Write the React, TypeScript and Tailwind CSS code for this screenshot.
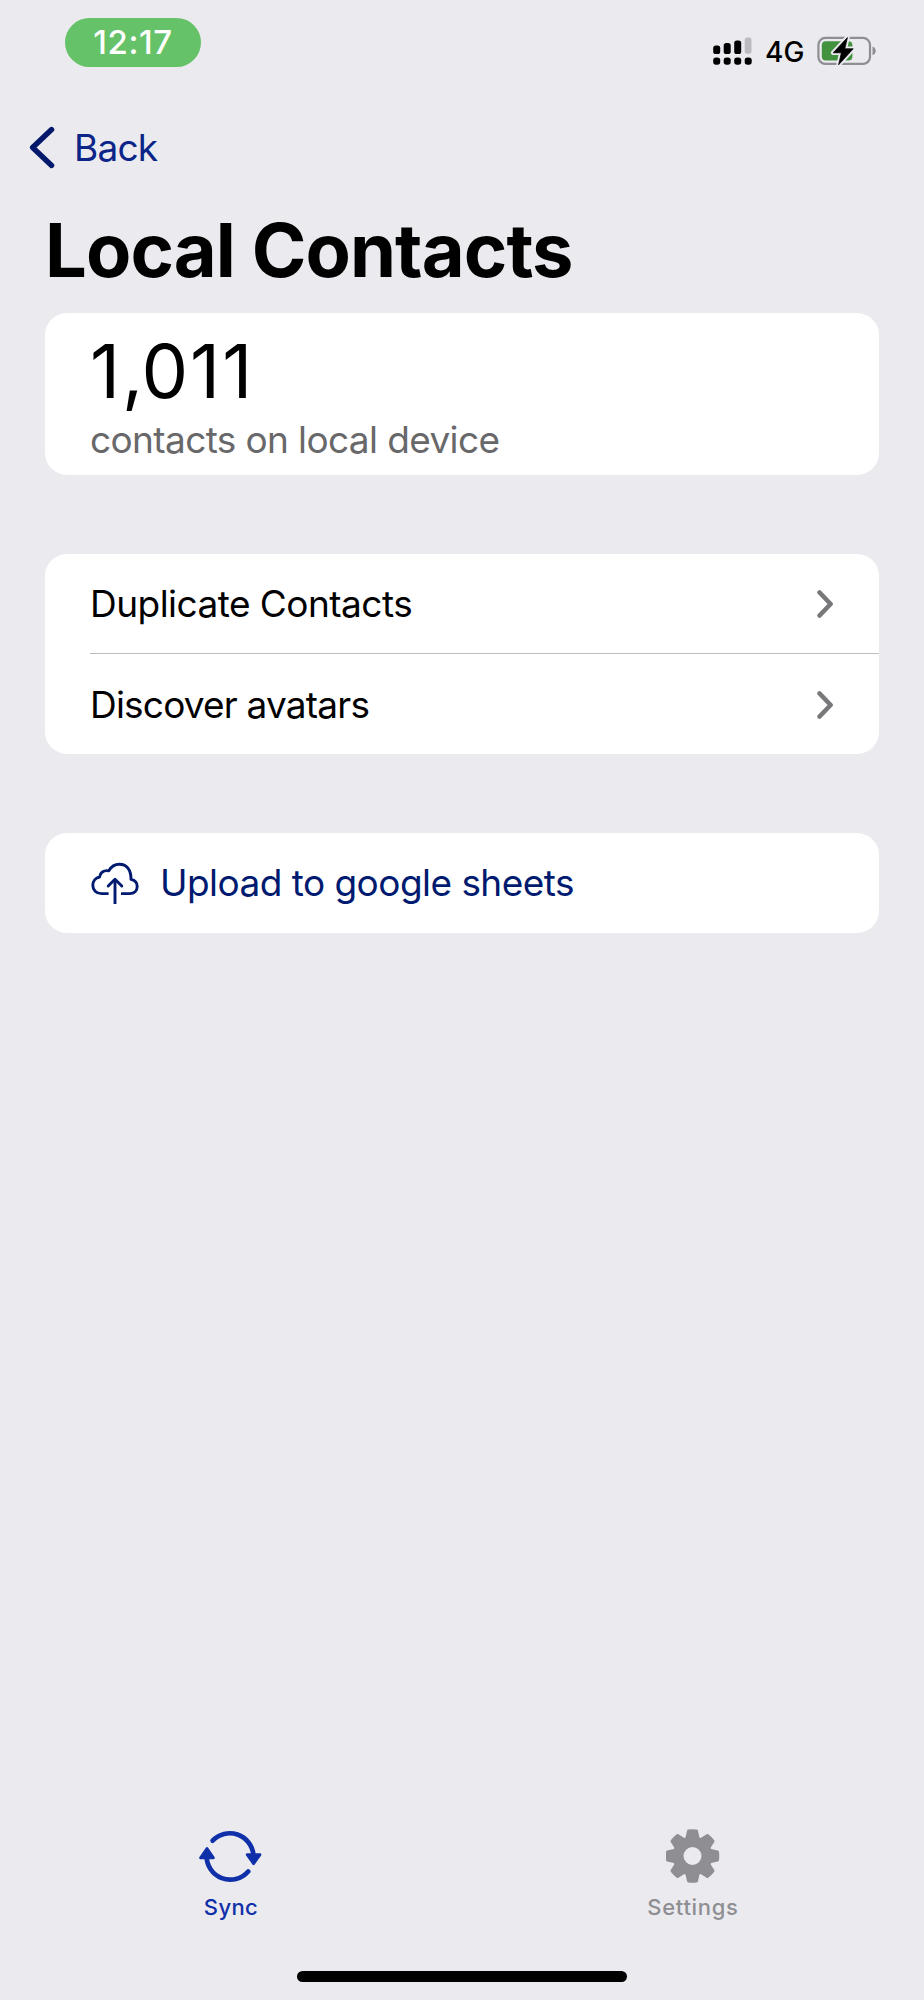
import React, { useState } from 'react';

interface MenuRow {
  id: number;
  label: string;
  tracking: string;
}

const ChevronRight = () => (
  <svg width="18" height="30" viewBox="0 0 18 30" fill="none">
    <path d="M2.6 3.5 L13.6 15 L2.6 26.5" stroke="#78787b" strokeWidth="4.6" strokeLinecap="round" strokeLinejoin="round" />
  </svg>
);

const SignalIcon = () => (
  <svg width="40" height="28" viewBox="0 0 40 28">
    <rect x="0.2" y="8.6" width="7" height="8.4" rx="2.6" />
    <rect x="10.7" y="6" width="7" height="11" rx="2.6" />
    <rect x="21.2" y="3.4" width="7" height="13.6" rx="2.6" />
    <rect x="31.7" y="0.4" width="6.8" height="16.4" rx="2.4" fill="#bcbcc0" />
    <rect x="0.2" y="20.4" width="7" height="7.4" rx="2.8" />
    <rect x="10.7" y="20.4" width="7" height="7.4" rx="2.8" />
    <rect x="21.2" y="20.4" width="7" height="7.4" rx="2.8" />
    <rect x="31.7" y="20.4" width="7" height="7.4" rx="2.8" />
  </svg>
);

const BatteryIcon = () => (
  <svg width="60" height="32" viewBox="0 0 60 32">
    <rect x="1.4" y="2.9" width="51.6" height="26" rx="7" fill="none" stroke="#8f8f93" strokeWidth="2.2" />
    <path d="M55.5 11.4 C59.8 12.8 59.8 18.8 55.5 20.2 Z" fill="#8f8f93" />
    <rect x="4.8" y="6.3" width="30.6" height="19.2" rx="4" fill="#43923f" />
    <path
      d="M30.4 2.6 L16.2 17.8 H24.4 L21.6 29.8 L36.2 13.8 H27.8 Z"
      stroke="#ebeaef"
      strokeWidth="4.6"
      strokeLinejoin="round"
    />
    <path d="M30.4 2.6 L16.2 17.8 H24.4 L21.6 29.8 L36.2 13.8 H27.8 Z" stroke="#000" strokeWidth="0.8" strokeLinejoin="round" />
  </svg>
);

const CloudUploadIcon = () => (
  <svg
    width="48"
    height="42"
    viewBox="0 0 48 42"
    fill="none"
    stroke="#001a70"
    strokeWidth="2.9"
    strokeLinejoin="round"
  >
    <path d="M17.6 31.6 H10.5 C5.2 31.6 1.8 27.9 1.8 23.3 C1.8 19 4.6 15.8 8.6 15 C8.9 10.8 12.6 7.8 17.8 8.8 C20.2 4.6 24 2.3 28.4 2.3 C35.4 2.3 40.2 7.6 40 17.4 C43.8 18.2 46.2 20.9 46.2 24.5 C46.2 28.6 43.2 31.6 38.6 31.6 H30" />
    <path d="M24 42 V17.4" />
    <path d="M17.2 24 L24 17.2 L30.8 24" strokeLinecap="round" />
  </svg>
);

const SyncIcon = () => (
  <svg width="64" height="54" viewBox="1 0.5 64 54" fill="none" stroke="#1030a9" strokeLinejoin="round">
    <path d="M14.6 12.2 A23.7 23.7 0 0 1 55.4 26" strokeWidth="4.7" strokeLinecap="round" />
    <path d="M50.2 43 A23.7 23.7 0 0 1 8.6 27" strokeWidth="4.7" strokeLinecap="round" />
    <path d="M49.2 26.2 H62 L55.6 35.2 Z" fill="#1030a9" strokeWidth="2.8" />
    <path d="M2.6 29.4 H15.4 L9 20 Z" fill="#1030a9" strokeWidth="2.8" />
  </svg>
);

const GearIcon = () => (
  <svg width="54" height="54" viewBox="-26.5 -27 54 54">
    <g fill="#8e8e93" stroke="#8e8e93" strokeWidth="3" strokeLinejoin="round">
      {[0, 45, 90, 135, 180, 225, 270, 315].map((angle) => (
        <path key={angle} d="M-6 -16 L-4 -25 Q0 -25.6 4 -25 L6 -16 Z" transform={`rotate(${angle})`} />
      ))}
    </g>
    <circle r="14.4" fill="none" stroke="#8e8e93" strokeWidth="10.8" />
  </svg>
);

const App: React.FC = () => {
  const [tab, setTab] = useState('sync');

  const rows: MenuRow[] = [
    { id: 1, label: 'Duplicate Contacts', tracking: 'tracking-[-0.53px]' },
    { id: 2, label: 'Discover avatars', tracking: 'tracking-[-0.8px]' },
  ];

  return (
    <div className="flex h-[2000px] w-[924px] flex-col bg-[#ebeaef] font-['Inter',sans-serif] text-black">
      {/* Status bar */}
      <header className="flex h-[100px] items-start justify-between pl-[65px] pr-[47px] pt-[18px]">
        <div className="flex h-[49px] w-[136px] items-center justify-center rounded-full bg-[#65c268] text-[33px] font-medium tracking-[0.6px] text-white">
          12:17
        </div>
        <div className="mt-[17px] flex h-[32px] items-center">
          <SignalIcon />
          <span className="ml-[12px] mt-[2px] w-[52px] text-[28px] font-medium leading-[32px] tracking-[0.2px]">4G</span>
          <BatteryIcon />
        </div>
      </header>

      <nav className="flex h-[95px] items-center pl-[28px]">
        <button className="flex cursor-pointer items-center text-[#0a2488]">
          <svg width="28" height="46" viewBox="0 0 28 46" fill="none">
            <path d="M23.6 4.5 L4.6 22.5 L23.6 40.5" stroke="#04196b" strokeWidth="5.4" strokeLinecap="round" strokeLinejoin="round" />
          </svg>
          <span className="ml-[18px] text-[37px] leading-[46px] tracking-[-0.8px]">Back</span>
        </button>
      </nav>

      <main className="flex flex-1 flex-col px-[45px]">
        <h1 className="h-[118px] text-[74px] font-bold leading-[110px] tracking-[-0.9px]">Local Contacts</h1>

        <section className="flex h-[162px] flex-col rounded-[22px] bg-white pl-[45px] pt-[14px]">
          <div className="text-[74px] leading-[88px] tracking-[2px]">
            1<span className="tracking-[-2px]">,</span>011
          </div>
          <div className="text-[37px] leading-[49px] tracking-[-0.62px] text-[#68686a]">contacts on local device</div>
        </section>

        <section className="mt-[79px] rounded-[22px] bg-white pl-[45px]">
          {rows.map((row) => (
            <button
              key={row.id}
              className="flex h-[100px] w-full cursor-pointer items-center justify-between border-b border-[#bdbdbf] pr-[44px] pt-px last:border-b-0"
            >
              <span className={`text-[37px] ${row.tracking}`}>{row.label}</span>
              <ChevronRight />
            </button>
          ))}
        </section>

        <section className="mt-[79px] rounded-[22px] bg-white">
          <button className="flex h-[100px] w-full cursor-pointer items-center pl-[46px] text-[#001a70]">
            <CloudUploadIcon />
            <span className="ml-[21px] text-[37px] tracking-[-0.54px]">Upload to google sheets</span>
          </button>
        </section>
      </main>

      {/* Tab bar */}
      <footer className="flex h-[171px] flex-col">
        <div className="grid h-[142px] grid-cols-2">
          <button onClick={() => setTab('sync')} className="flex cursor-pointer flex-col items-center text-[#1030a9]" aria-current={tab === 'sync'}>
            <SyncIcon />
            <span className="mt-[10px] text-[22px] font-medium leading-[28px] tracking-[0.4px]">Sync</span>
          </button>
          <button onClick={() => setTab('settings')} className="flex cursor-pointer flex-col items-center text-[#8e8e93]" aria-current={tab === 'settings'}>
            <GearIcon />
            <span className="mt-[10px] text-[22px] font-medium leading-[28px] tracking-[0.7px]">Settings</span>
          </button>
        </div>
        <div className="mx-auto h-[11px] w-[330px] rounded-full bg-black" />
      </footer>
    </div>
  );
};

export default App;
